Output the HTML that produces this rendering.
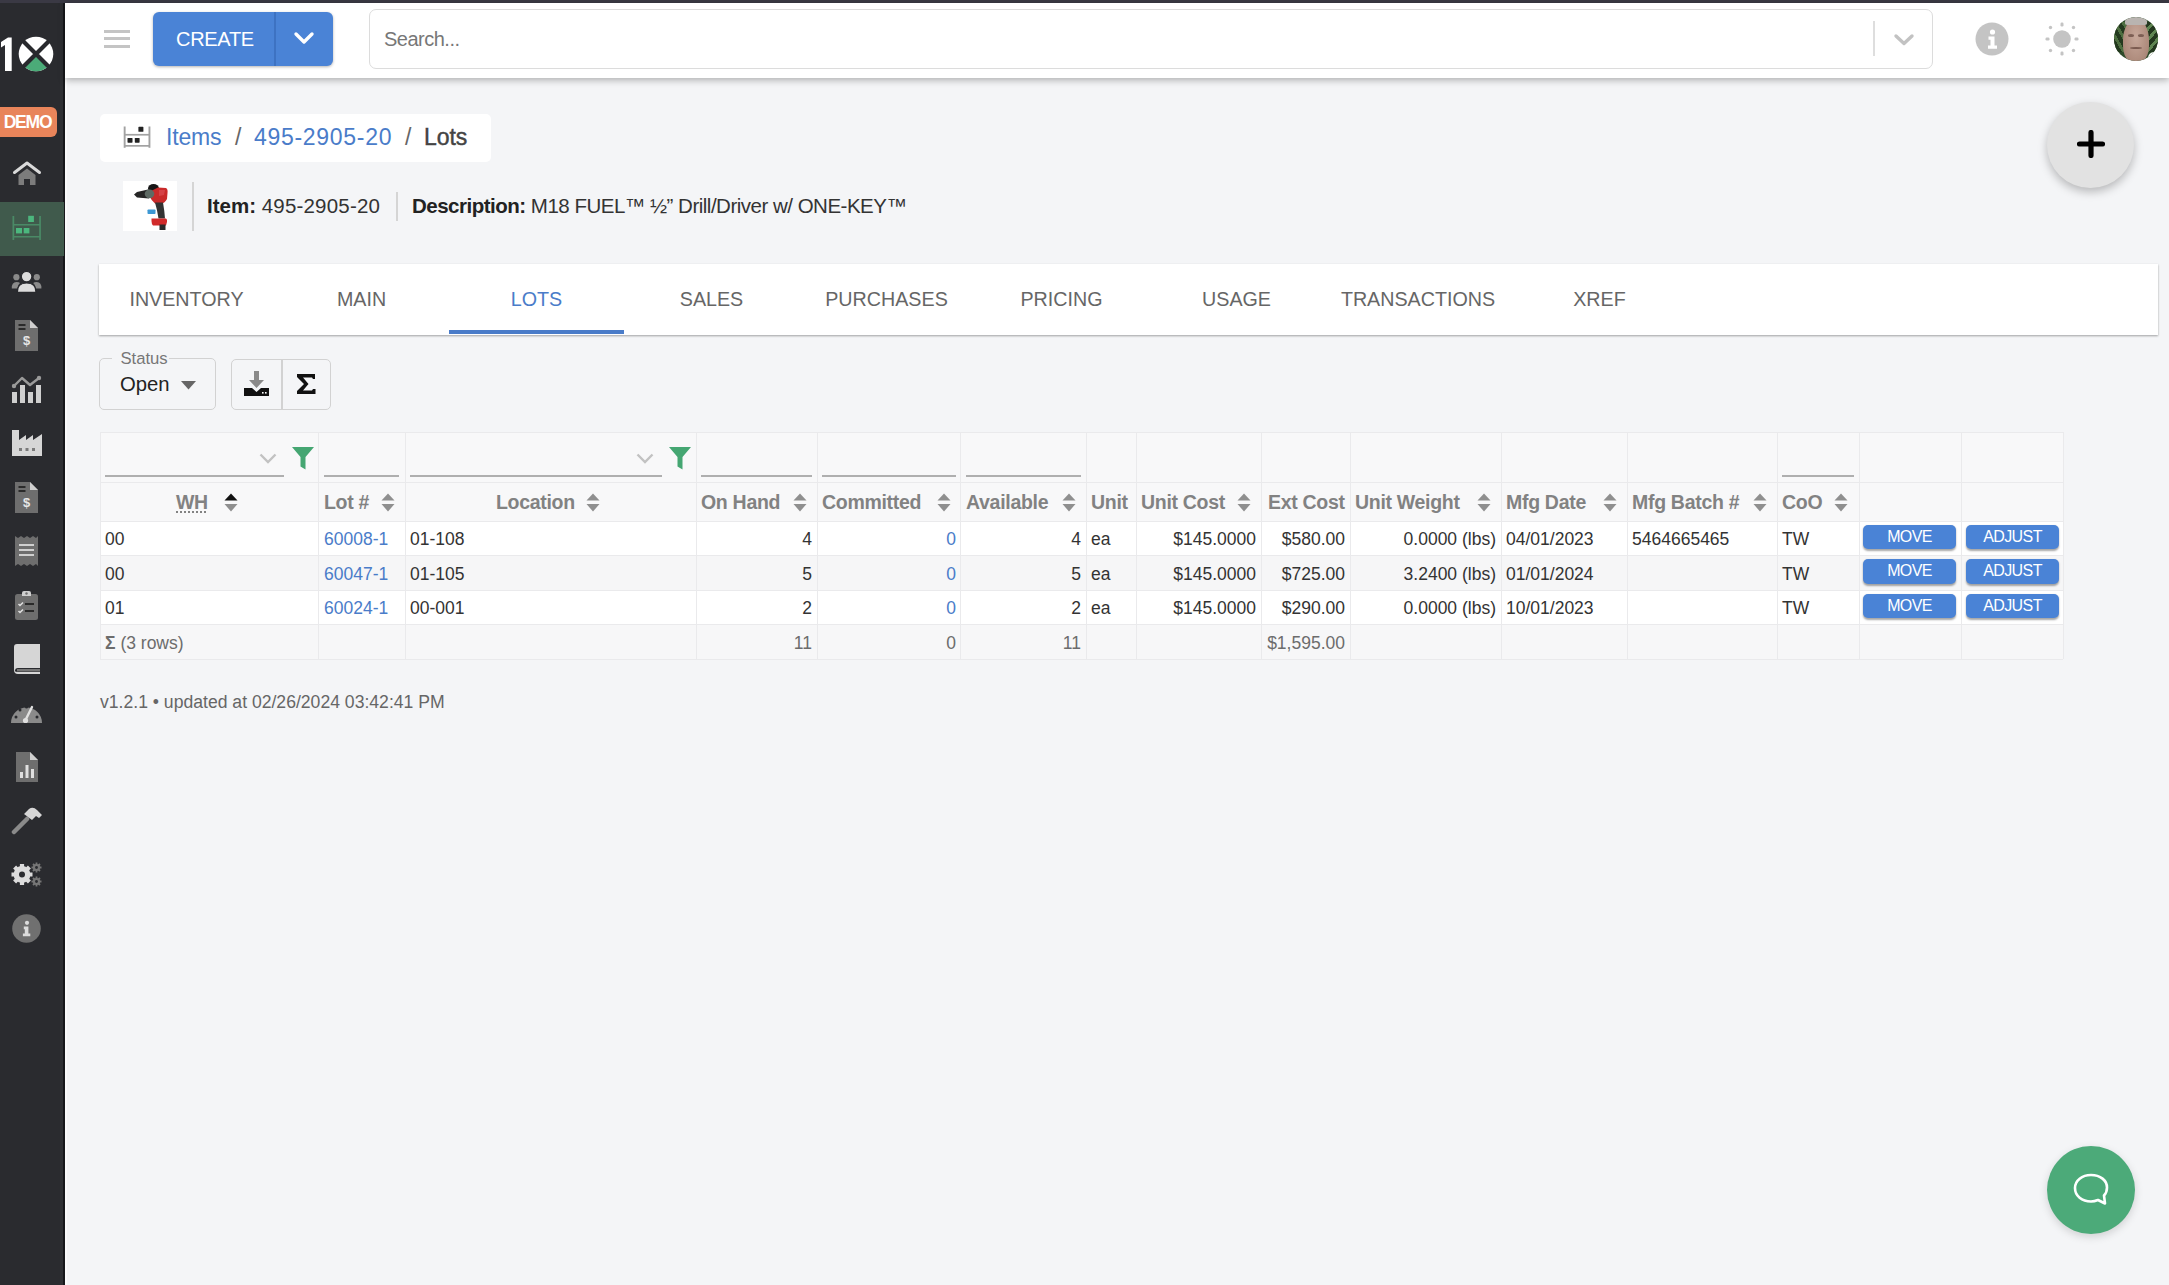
<!DOCTYPE html>
<html><head><meta charset="utf-8">
<style>
*{box-sizing:border-box;margin:0;padding:0}
html,body{width:2169px;height:1285px;overflow:hidden;background:#f4f5f7;font-family:"Liberation Sans",sans-serif;color:#333}
.abs{position:absolute}
#topbar{left:0;top:0;width:2169px;height:3px;background:#3a3944}
#side{left:0;top:3px;width:65px;height:1282px;background:#2a2b2f}
#side .edge{position:absolute;left:60.3px;top:0;width:2.4px;height:100%;background:#2f3034}
#side .line{position:absolute;left:62.8px;top:0;width:2.2px;height:100%;background:#17181b}
#hdr{left:65px;top:3px;width:2104px;height:75px;background:#fff;box-shadow:0 2px 7px rgba(0,0,0,.3)}
.ic{position:absolute}

.tab{display:flex;align-items:center;justify-content:center;height:71px;padding-top:1.5px}
.tab.act{color:#4a7cc9}

.hl{height:1px;background:#eaeaec}
.vl{width:1px;background:#eaeaec}
.th{top:488px;font-size:19.5px;line-height:28px;font-weight:700;color:#828282;white-space:nowrap;letter-spacing:-0.3px}
.td{font-size:17.5px;line-height:28px;white-space:nowrap;margin-top:1px}
.btn{margin-top:-1.7px;height:24.5px;background:#4a83d6;border-radius:5px;color:#fff;font-size:16px;letter-spacing:-0.6px;line-height:23px;text-align:center;box-shadow:0 1.5px 2px rgba(0,0,0,.35)}
</style></head><body>
<div id="topbar" class="abs"></div>
<div id="side" class="abs"><div class="edge"></div><div class="line"></div></div>

<!-- logo -->
<svg class="abs" style="left:0;top:36px" width="56" height="37" viewBox="0 0 56 37">
 <path d="M1 6 L8 1.5 H11.7 V35 H5 V9 L1 11.5 Z" fill="#fff"/>
 <circle cx="36" cy="18" r="17.3" fill="#fff"/>
 <path d="M36 18 L48.2 30.2 A17.3 17.3 0 0 1 23.8 30.2 Z" fill="#4bab78"/>
 <path d="M23 5 L49 31 M49 5 L23 31" stroke="#28292d" stroke-width="4.2"/>
</svg>
<div class="abs" style="left:0;top:107px;width:57px;height:30px;background:#e8845a;border-radius:0 6px 6px 0;color:#fff;font-weight:700;font-size:17.5px;line-height:30px;text-align:center;letter-spacing:-1.2px;text-indent:-2px">DEMO</div>
<!-- active item bg -->
<div class="abs" style="left:0;top:202px;width:64px;height:54px;background:#405a4c"></div>
<!-- home -->
<svg class="abs" style="left:12px;top:161px" width="30" height="25" viewBox="0 0 30 25">
 <path d="M6.5 14 L15 7.5 L23.5 14 V24 H18 V18 H12 V24 H6.5 Z" fill="#7c7c7c"/>
 <path d="M2.5 11.5 L15 2 L27.5 11.5" fill="none" stroke="#dadada" stroke-width="3" stroke-linecap="round" stroke-linejoin="round"/>
</svg>
<!-- items (active) -->
<svg class="abs" style="left:12px;top:215px" width="30" height="26" viewBox="0 0 30 26"><g fill="#4a8a66"><rect x="0.5" y="1" width="1.7" height="24"/><rect x="27.2" y="1" width="1.7" height="24"/><rect x="1" y="9" width="27" height="1.5"/><rect x="1" y="21" width="27" height="1.5"/></g><g fill="#4cb77e"><rect x="16.2" y="0.8" width="5.7" height="6.2"/><rect x="4" y="13" width="6" height="5.4"/><rect x="11.7" y="13" width="5.7" height="5.4"/></g></svg>
<!-- people -->
<svg class="abs" style="left:11px;top:270px" width="32" height="24" viewBox="0 0 32 24"><g fill="#8a8a8a"><circle cx="5.4" cy="7.2" r="3.1"/><circle cx="25.8" cy="7.2" r="3.1"/><path d="M0.8 18.5 Q0.5 12 5.5 12 Q8 12 9 13 Q6.5 15 6.3 18.5 Z"/><path d="M30.4 18.5 Q30.7 12 25.7 12 Q23.2 12 22.2 13 Q24.7 15 24.9 18.5 Z"/></g><g fill="#dcdcdc" stroke="#28292d" stroke-width="1.2"><circle cx="15.6" cy="6.6" r="5.3"/><path d="M6.3 22.4 Q6 13 15.6 13 Q25.2 13 25 22.4 Z"/></g></svg>
<!-- invoice -->
<svg class="abs ic" style="left:15px;top:320px" width="24" height="31" viewBox="0 0 24 31">
 <path d="M0 0 H15 L23 8 V31 H0 Z" fill="#6e6e6e"/><path d="M15 0 L23 8 H15 Z" fill="#cfcfcf"/>
 <rect x="3.5" y="4" width="7" height="2" fill="#2a2a2a"/><rect x="3.5" y="8" width="7" height="2" fill="#2a2a2a"/>
 <text x="11.5" y="25" font-family="Liberation Sans" font-size="13" font-weight="700" fill="#e6e6e6" text-anchor="middle">$</text>
</svg>
<!-- chart -->
<svg class="abs ic" style="left:11px;top:375px" width="31" height="28" viewBox="0 0 31 28">
 <g fill="#cfcfcf"><rect x="1" y="17" width="5" height="11"/><rect x="9" y="10" width="5" height="18"/><rect x="17" y="17" width="5" height="11"/><rect x="25" y="10" width="5" height="18"/></g>
 <path d="M3 11 L11 3 L19 10 L28 3" fill="none" stroke="#9a9a9a" stroke-width="2.4" stroke-linejoin="round"/>
 <circle cx="3" cy="11" r="2.2" fill="#9a9a9a"/><circle cx="28" cy="3" r="2.2" fill="#9a9a9a"/>
</svg>
<!-- factory -->
<svg class="abs ic" style="left:12px;top:430px" width="30" height="26" viewBox="0 0 30 26">
 <path d="M0 0 H7 V10 L14 5 V10 L21 5 V10 L30 4 V26 H0 Z" fill="#d6d6d6"/>
 <g fill="#7a7a7a"><rect x="7" y="18" width="3" height="3"/><rect x="13.5" y="18" width="3" height="3"/><rect x="20" y="18" width="3" height="3"/></g>
</svg>
<!-- invoice 2 -->
<svg class="abs ic" style="left:15px;top:482px" width="24" height="31" viewBox="0 0 24 31">
 <path d="M0 0 H15 L23 8 V31 H0 Z" fill="#6e6e6e"/><path d="M15 0 L23 8 H15 Z" fill="#cfcfcf"/>
 <rect x="3.5" y="4" width="7" height="2" fill="#2a2a2a"/><rect x="3.5" y="8" width="7" height="2" fill="#2a2a2a"/>
 <text x="11.5" y="25" font-family="Liberation Sans" font-size="13" font-weight="700" fill="#e6e6e6" text-anchor="middle">$</text>
</svg>
<!-- receipt -->
<svg class="abs ic" style="left:15px;top:536px" width="24" height="30" viewBox="0 0 24 30">
 <path d="M0 0 L3 2 L6 0 L9 2 L12 0 L15 2 L18 0 L21 2 L23 0 V30 L21 28 L18 30 L15 28 L12 30 L9 28 L6 30 L3 28 L0 30 Z" fill="#6e6e6e"/>
 <g fill="#cfcfcf"><rect x="4" y="8" width="15" height="2"/><rect x="4" y="13" width="15" height="2"/><rect x="4" y="18" width="15" height="2"/></g>
</svg>
<!-- clipboard -->
<svg class="abs ic" style="left:15px;top:590px" width="24" height="30" viewBox="0 0 24 30">
 <rect x="0" y="4" width="23" height="26" rx="2.5" fill="#6e6e6e"/>
 <path d="M7 6 V3 Q7 1 9 1 H14 Q16 1 16 3 V6 Z" fill="#cfcfcf"/><circle cx="11.5" cy="3.5" r="1.2" fill="#6e6e6e"/>
 <path d="M3.5 14 L5 15.5 L8 12.5" fill="none" stroke="#e0e0e0" stroke-width="1.5"/><rect x="10" y="13" width="9" height="2" fill="#2a2a2a"/>
 <path d="M3.5 21 L5 22.5 L8 19.5" fill="none" stroke="#e0e0e0" stroke-width="1.5"/><rect x="10" y="20" width="9" height="2" fill="#2a2a2a"/>
</svg>
<!-- book -->
<svg class="abs ic" style="left:14px;top:644px" width="26" height="30" viewBox="0 0 26 30">
 <path d="M3 0 H26 V24 H4 Q1 24 1 27 Q1 28 4 28 H26 V30 H4 Q0 30 0 26 V3 Q0 0 3 0 Z" fill="#d6d6d6"/>
 <rect x="3" y="25" width="23" height="2.5" fill="#777"/>
</svg>
<!-- gauge -->
<svg class="abs ic" style="left:11px;top:702px" width="31" height="22" viewBox="0 0 31 22">
 <path d="M0 21 A15.5 15.5 0 0 1 31 21 Z" fill="#8a8a8a"/>
 <g fill="#28292d"><circle cx="5" cy="15" r="1.5"/><circle cx="9" cy="8" r="1.5"/><circle cx="15.5" cy="5" r="1.5"/><circle cx="26" cy="15" r="1.5"/></g>
 <path d="M14 19 L21 5" stroke="#e0e0e0" stroke-width="2.4" stroke-linecap="round"/><circle cx="14.5" cy="18.5" r="2.6" fill="#e0e0e0"/>
</svg>
<!-- report -->
<svg class="abs ic" style="left:16px;top:752px" width="23" height="30" viewBox="0 0 23 30">
 <path d="M0 0 H14 L22 8 V30 H0 Z" fill="#6e6e6e"/><path d="M14 0 L22 8 H14 Z" fill="#cfcfcf"/>
 <g fill="#e0e0e0"><rect x="4" y="20" width="3" height="6"/><rect x="9.5" y="13" width="3" height="13"/><rect x="15" y="17" width="3" height="9"/></g>
</svg>
<!-- hammer -->
<svg class="abs ic" style="left:11px;top:806px" width="31" height="29" viewBox="0 0 31 29">
 <path d="M3 26 L16 13" stroke="#8a8a8a" stroke-width="4.5" stroke-linecap="round"/>
 <path d="M13 8 L18 3 Q22 0 26 4 L31 9 L28 12 L25 10 L21 14 Z" fill="#d6d6d6"/>
</svg>
<!-- gears -->
<svg class="abs ic" style="left:11px;top:862px" width="31" height="25" viewBox="0 0 31 25">
 <g fill="#dcdcdc"><circle cx="11" cy="12.5" r="8.4"/>
 <g stroke="#dcdcdc" stroke-width="4.2"><path d="M11 2 V23 M0.5 12.5 H21.5 M3.6 5.1 L18.4 19.9 M18.4 5.1 L3.6 19.9"/></g></g>
 <circle cx="11" cy="12.5" r="3" fill="#2a2b2f"/>
 <g fill="#767676"><circle cx="25.5" cy="5.5" r="3.6"/><circle cx="25.5" cy="19.5" r="3.6"/></g><g stroke="#767676" stroke-width="1.8"><path d="M25.5 0.5 V10.5 M20.5 5.5 H30.5 M22 2 L29 9 M29 2 L22 9"/><path d="M25.5 14.5 V24.5 M20.5 19.5 H30.5 M22 16 L29 23 M29 16 L22 23"/></g><g fill="#2a2b2f"><circle cx="25.5" cy="5.5" r="1.4"/><circle cx="25.5" cy="19.5" r="1.4"/></g>
</svg>
<!-- info -->
<svg class="abs ic" style="left:12px;top:914px" width="29" height="29" viewBox="0 0 29 29">
 <circle cx="14.5" cy="14.5" r="14.3" fill="#707070"/><circle cx="15" cy="8.8" r="2.1" fill="#dcdcdc"/>
 <path d="M11.8 12.5 h4.6 v7 h1.9 v2.8 h-7.4 v-2.8 h1.9 v-4.2 h-1 z" fill="#dcdcdc"/>
</svg>
<div class="abs" style="left:65px;top:3px;width:2px;height:1282px;background:#fbfbfc"></div>
<div id="hdr" class="abs"></div>

<!-- hamburger -->
<div class="abs" style="left:104px;top:30px;width:26px;height:3px;background:#c4c4c4"></div>
<div class="abs" style="left:104px;top:37px;width:26px;height:3px;background:#c4c4c4"></div>
<div class="abs" style="left:104px;top:45px;width:26px;height:3px;background:#c4c4c4"></div>
<!-- create button -->
<div class="abs" style="left:153px;top:12px;width:180px;height:54px;background:#4a83d6;border-radius:6px;box-shadow:0 1px 3px rgba(0,0,0,.3)"></div>
<div class="abs" style="left:274px;top:12px;width:2px;height:54px;background:#3d72c2"></div>
<div class="abs" style="left:176px;top:25px;font-size:20px;color:#fff;line-height:28px;letter-spacing:-0.3px">CREATE</div>
<svg class="abs" style="left:293px;top:31px" width="22" height="15" viewBox="0 0 22 15"><path d="M3 3 L11 11 L19 3" fill="none" stroke="#fff" stroke-width="3.4" stroke-linecap="round" stroke-linejoin="round"/></svg>
<!-- search -->
<div class="abs" style="left:369px;top:9px;width:1564px;height:60px;border:1.5px solid #dcdcdc;border-radius:7px;background:#fff"></div>
<div class="abs" style="left:384px;top:25px;font-size:20px;color:#777;line-height:28px;letter-spacing:-0.5px">Search...</div>
<div class="abs" style="left:1873px;top:21px;width:2px;height:35px;background:#dedede"></div>
<svg class="abs" style="left:1891px;top:31px" width="26" height="18" viewBox="0 0 26 18"><path d="M5 5 L13 12.5 L21 5" fill="none" stroke="#c2c2c2" stroke-width="3.4" stroke-linecap="round" stroke-linejoin="round"/></svg>
<!-- info -->
<svg class="abs" style="left:1975px;top:22px" width="34" height="34" viewBox="0 0 34 34"><circle cx="17" cy="17" r="16.5" fill="#c4c4c4"/><circle cx="17.5" cy="10" r="2.6" fill="#fff"/><path d="M13.5 14.5 h6 v9 h2.5 v3.2 h-9 v-3.2 h2.5 v-5.8 h-2 z" fill="#fff"/></svg>
<!-- sun -->
<svg class="abs" style="left:2045px;top:22px" width="34" height="34" viewBox="0 0 34 34"><circle cx="17" cy="17" r="8.8" fill="#c4c4c4"/><g fill="#c4c4c4"><rect x="15.5" y="0.5" width="3" height="4" rx="1.2"/><rect x="15.5" y="29.5" width="3" height="4" rx="1.2"/><rect x="0.5" y="15.5" width="4" height="3" rx="1.2"/><rect x="29.5" y="15.5" width="4" height="3" rx="1.2"/><circle cx="5.5" cy="5.5" r="1.7"/><circle cx="28.5" cy="5.5" r="1.7"/><circle cx="5.5" cy="28.5" r="1.7"/><circle cx="28.5" cy="28.5" r="1.7"/></g></svg>
<!-- avatar -->
<div class="abs" style="left:2114px;top:17px;width:44px;height:44px;border-radius:50%;overflow:hidden;background:#2e4a2a">
 <div style="position:absolute;left:0;top:5px;width:12px;height:30px;background:repeating-linear-gradient(60deg,#4d6e40 0 3px,#23391e 3px 7px);filter:blur(0.7px)"></div>
 <div style="position:absolute;left:32px;top:5px;width:12px;height:30px;background:repeating-linear-gradient(-50deg,#5f8552 0 3px,#24381f 3px 7px);filter:blur(0.7px)"></div>
 <div style="position:absolute;left:9px;top:2px;width:26px;height:44px;border-radius:48% 48% 40% 40%;background:radial-gradient(ellipse at 50% 40%,#c7a89a 0,#ad8a7b 70%,#8d7064 100%)"></div>
 <div style="position:absolute;left:11px;top:0px;width:22px;height:8px;border-radius:50% 50% 20% 20%;background:#b9b4b0"></div>
 <div style="position:absolute;left:14px;top:17px;width:6px;height:3px;border-radius:50%;background:#7d5f54;filter:blur(0.6px)"></div>
 <div style="position:absolute;left:24px;top:17px;width:6px;height:3px;border-radius:50%;background:#7d5f54;filter:blur(0.6px)"></div>
 <div style="position:absolute;left:16px;top:30px;width:12px;height:2px;border-radius:50%;background:#7a5a4f;filter:blur(0.5px)"></div>
 <div style="position:absolute;left:34px;top:35px;width:12px;height:12px;border-radius:50%;background:#fff"></div>
</div>
</div>


<!-- breadcrumb -->
<div class="abs" style="left:100px;top:114px;width:391px;height:48px;background:#fff;border-radius:5px"></div>
<svg class="abs" style="left:123px;top:126px" width="28" height="23" viewBox="0 0 28 23"><g fill="#a2a2a2"><rect x="0.7" y="0.5" width="1.9" height="21.3"/><rect x="25.5" y="0.5" width="1.9" height="21.3"/><rect x="1" y="7.9" width="26" height="1.7"/><rect x="1" y="19" width="26" height="1.7"/></g><g fill="#222"><rect x="15.4" y="0.8" width="5" height="5" rx="0.6"/><rect x="4.5" y="12" width="5" height="4.7" rx="0.6"/><rect x="11.8" y="12" width="4.8" height="4.7" rx="0.6"/></g></svg>
<div class="abs" style="left:166px;top:123px;font-size:23px;line-height:28px;color:#4a7cc9;letter-spacing:-0.2px">Items</div>
<div class="abs" style="left:235px;top:123px;font-size:23px;line-height:28px;color:#666">/</div>
<div class="abs" style="left:254px;top:123px;font-size:23px;line-height:28px;color:#4a7cc9;letter-spacing:0.7px">495-2905-20</div>
<div class="abs" style="left:405px;top:123px;font-size:23px;line-height:28px;color:#666">/</div>
<div class="abs" style="left:424px;top:123px;font-size:23px;line-height:28px;color:#444;font-weight:400;-webkit-text-stroke:0.45px #444;letter-spacing:-0.1px">Lots</div>
<!-- item line -->
<div class="abs" style="left:123px;top:181px;width:54px;height:50px;background:#fff"></div>
<svg class="abs" style="left:123px;top:181px;filter:blur(0.4px)" width="54" height="50" viewBox="0 0 54 50">
 <path d="M11 13.5 L14 11 L25 8.5 L26 17.5 L14 16.5 Z" fill="#262626"/>
 <ellipse cx="30.5" cy="7.5" rx="5.5" ry="4.5" fill="#151515"/>
 <path d="M27 10.5 L35 6.5 L43 7 Q45 8 44.5 12 L44 18 Q42 22 38 23 L32 22.5 Q28 19 27 16 Z" fill="#c92a2a"/>
 <path d="M36 9 L42 9 L41 14 L36 15 Z" fill="#e0545a" opacity=".6"/>
 <ellipse cx="26.5" cy="12.8" rx="4.8" ry="4.4" fill="#5e6a64"/>
 <path d="M32 21.5 L40 21.5 Q41.5 30 42 37.5 L35.5 37.5 Q34 28 32 21.5 Z" fill="#333"/>
 <rect x="24.5" y="28.5" width="8" height="4.5" rx="0.8" fill="#3d98d4"/>
 <path d="M28.5 37.5 H43 Q44.5 38 44 41 L43 44.5 H30 Q28.5 43 28.5 40 Z" fill="#d12b2b"/>
 <rect x="36.5" y="43.5" width="6" height="5.5" fill="#2a2a2a"/>
</svg>
<div class="abs" style="left:192px;top:182px;width:2px;height:49px;background:#d5d5d5"></div>
<div class="abs" style="left:207px;top:192px;font-size:20.5px;line-height:28px;color:#222"><b>Item:</b> <span style="color:#333;letter-spacing:0.2px">495-2905-20</span></div>
<div class="abs" style="left:396px;top:192px;width:2px;height:29px;background:#d5d5d5"></div>
<div class="abs" style="left:412px;top:192px;font-size:20.5px;line-height:28px;color:#222;letter-spacing:-0.5px"><b>Description:</b> <span style="color:#333">M18 FUEL™ ½” Drill/Driver w/ ONE-KEY™</span></div>
<!-- tabs -->
<div class="abs" style="left:99px;top:264px;width:2059px;height:70.5px;background:#fff;box-shadow:0 1px 2px rgba(0,0,0,.35)"></div>
<div class="abs tabs" style="left:99px;top:263px;height:71px;display:flex;font-size:19.7px;color:#666">
 <div class="tab" style="width:175px">INVENTORY</div>
 <div class="tab" style="width:175px">MAIN</div>
 <div class="tab act" style="width:175px">LOTS</div>
 <div class="tab" style="width:175px">SALES</div>
 <div class="tab" style="width:175px">PURCHASES</div>
 <div class="tab" style="width:175px">PRICING</div>
 <div class="tab" style="width:175px">USAGE</div>
 <div class="tab" style="width:188px">TRANSACTIONS</div>
 <div class="tab" style="width:175px">XREF</div>
</div>
<div class="abs" style="left:449px;top:330px;width:175px;height:4px;background:#4a7cc9"></div>
<!-- status -->
<div class="abs" style="left:99px;top:358px;width:117px;height:52px;border:1.5px solid #d2d2d2;border-radius:5px"></div>
<div class="abs" style="left:112px;top:349px;padding:0 1.5px 0 8.4px;background:#f4f5f7;font-size:16.7px;line-height:20px;color:#777">Status</div>
<div class="abs" style="left:120px;top:371px;font-size:20.3px;line-height:26px;color:#222">Open</div>
<svg class="abs" style="left:181px;top:381px" width="15" height="9" viewBox="0 0 15 9"><path d="M0 0 H15 L7.5 8.5 Z" fill="#666"/></svg>
<!-- button group -->
<div class="abs" style="left:231px;top:359px;width:100px;height:51px;border:1.5px solid #d2d2d2;border-radius:5px"></div>
<div class="abs" style="left:281px;top:359px;width:1.5px;height:51px;background:#d2d2d2"></div>
<svg class="abs" style="left:244px;top:371px" width="25" height="25" viewBox="0 0 25 25"><path d="M10 0 h5 v9 h5 l-7.5 8 l-7.5 -8 h5 z" fill="#8a8a8a"/><path d="M0 17 h8 l4.5 4 l4.5 -4 h8 v8 h-25 z" fill="#111"/><rect x="18" y="21" width="1.6" height="1.6" fill="#fff"/><rect x="21" y="21" width="1.6" height="1.6" fill="#fff"/></svg>
<svg class="abs" style="left:297px;top:374px" width="19" height="20" viewBox="0 0 19 20"><path d="M0 0 H18 V5 H16 L15 3.5 H6 L11.5 10 L6 16.5 H15 L16 15 H18.5 V20 H0 V17 L7 10 L0 3 Z" fill="#111"/></svg>
<div class="abs" style="left:100px;top:432px;width:1963px;height:89px;background:#f8f8f9"></div>
<div class="abs" style="left:100px;top:521px;width:1963px;height:34.5px;background:#ffffff"></div>
<div class="abs" style="left:100px;top:555.5px;width:1963px;height:34.5px;background:#f6f6f7"></div>
<div class="abs" style="left:100px;top:590px;width:1963px;height:34.5px;background:#ffffff"></div>
<div class="abs" style="left:100px;top:624.5px;width:1963px;height:34.5px;background:#f7f7f8"></div>
<div class="abs hl" style="left:100px;top:431.5px;width:1963px"></div>
<div class="abs hl" style="left:100px;top:481.5px;width:1963px"></div>
<div class="abs hl" style="left:100px;top:520.5px;width:1963px"></div>
<div class="abs hl" style="left:100px;top:555.0px;width:1963px"></div>
<div class="abs hl" style="left:100px;top:589.5px;width:1963px"></div>
<div class="abs hl" style="left:100px;top:624.0px;width:1963px"></div>
<div class="abs hl" style="left:100px;top:658.5px;width:1963px"></div>
<div class="abs vl" style="left:99.5px;top:432px;height:227px"></div>
<div class="abs vl" style="left:317.5px;top:432px;height:227px"></div>
<div class="abs vl" style="left:404.5px;top:432px;height:227px"></div>
<div class="abs vl" style="left:695.5px;top:432px;height:227px"></div>
<div class="abs vl" style="left:816.5px;top:432px;height:227px"></div>
<div class="abs vl" style="left:959.5px;top:432px;height:227px"></div>
<div class="abs vl" style="left:1085.5px;top:432px;height:227px"></div>
<div class="abs vl" style="left:1135.5px;top:432px;height:227px"></div>
<div class="abs vl" style="left:1260.5px;top:432px;height:227px"></div>
<div class="abs vl" style="left:1349.5px;top:432px;height:227px"></div>
<div class="abs vl" style="left:1500.5px;top:432px;height:227px"></div>
<div class="abs vl" style="left:1626.5px;top:432px;height:227px"></div>
<div class="abs vl" style="left:1776.5px;top:432px;height:227px"></div>
<div class="abs vl" style="left:1858.5px;top:432px;height:227px"></div>
<div class="abs vl" style="left:1960.5px;top:432px;height:227px"></div>
<div class="abs vl" style="left:2062.5px;top:432px;height:227px"></div>
<div class="abs" style="left:105px;top:475px;width:179px;height:2px;background:#afafaf"></div>
<svg class="abs" style="left:259px;top:453px" width="18" height="11" viewBox="0 0 18 11"><path d="M1.5 1.5 L9 9 L16.5 1.5" fill="none" stroke="#c2c2c2" stroke-width="2.4"/></svg>
<svg class="abs" style="left:292px;top:447px" width="22" height="23" viewBox="0 0 22 23"><path d="M0 0 H22 L13.5 10 V22.5 L8.5 19.5 V10 Z" fill="#45a672"/></svg>
<div class="abs" style="left:324px;top:475px;width:75px;height:2px;background:#afafaf"></div>
<div class="abs" style="left:410px;top:475px;width:252px;height:2px;background:#afafaf"></div>
<svg class="abs" style="left:636px;top:453px" width="18" height="11" viewBox="0 0 18 11"><path d="M1.5 1.5 L9 9 L16.5 1.5" fill="none" stroke="#c2c2c2" stroke-width="2.4"/></svg>
<svg class="abs" style="left:669px;top:447px" width="22" height="23" viewBox="0 0 22 23"><path d="M0 0 H22 L13.5 10 V22.5 L8.5 19.5 V10 Z" fill="#45a672"/></svg>
<div class="abs" style="left:701px;top:475px;width:111px;height:2px;background:#afafaf"></div>
<div class="abs" style="left:822px;top:475px;width:134px;height:2px;background:#afafaf"></div>
<div class="abs" style="left:966px;top:475px;width:115px;height:2px;background:#afafaf"></div>
<div class="abs" style="left:1782px;top:475px;width:72px;height:2px;background:#afafaf"></div>
<div class="abs th" style="left:176px;"><span style="text-decoration:underline dotted;text-underline-offset:3px">WH</span></div>
<svg class="abs" style="left:224px;top:493px" width="14" height="19" viewBox="0 0 14 19"><path d="M7 0.5 L13.5 7.5 H0.5 Z" fill="#111"/><path d="M7 18.5 L13.5 11 H0.5 Z" fill="#8f8f8f"/></svg>
<div class="abs th" style="left:324px;">Lot #</div>
<svg class="abs" style="left:381px;top:493px" width="14" height="19" viewBox="0 0 14 19"><path d="M7 0.5 L13.5 7.5 H0.5 Z" fill="#8f8f8f"/><path d="M7 18.5 L13.5 11 H0.5 Z" fill="#8f8f8f"/></svg>
<div class="abs th" style="left:496px;">Location</div>
<svg class="abs" style="left:586px;top:493px" width="14" height="19" viewBox="0 0 14 19"><path d="M7 0.5 L13.5 7.5 H0.5 Z" fill="#8f8f8f"/><path d="M7 18.5 L13.5 11 H0.5 Z" fill="#8f8f8f"/></svg>
<div class="abs th" style="left:701px;">On Hand</div>
<svg class="abs" style="left:793px;top:493px" width="14" height="19" viewBox="0 0 14 19"><path d="M7 0.5 L13.5 7.5 H0.5 Z" fill="#8f8f8f"/><path d="M7 18.5 L13.5 11 H0.5 Z" fill="#8f8f8f"/></svg>
<div class="abs th" style="left:822px;">Committed</div>
<svg class="abs" style="left:937px;top:493px" width="14" height="19" viewBox="0 0 14 19"><path d="M7 0.5 L13.5 7.5 H0.5 Z" fill="#8f8f8f"/><path d="M7 18.5 L13.5 11 H0.5 Z" fill="#8f8f8f"/></svg>
<div class="abs th" style="left:966px;">Available</div>
<svg class="abs" style="left:1062px;top:493px" width="14" height="19" viewBox="0 0 14 19"><path d="M7 0.5 L13.5 7.5 H0.5 Z" fill="#8f8f8f"/><path d="M7 18.5 L13.5 11 H0.5 Z" fill="#8f8f8f"/></svg>
<div class="abs th" style="left:1091px;">Unit</div>
<div class="abs th" style="left:1141px;">Unit Cost</div>
<svg class="abs" style="left:1237px;top:493px" width="14" height="19" viewBox="0 0 14 19"><path d="M7 0.5 L13.5 7.5 H0.5 Z" fill="#8f8f8f"/><path d="M7 18.5 L13.5 11 H0.5 Z" fill="#8f8f8f"/></svg>
<div class="abs th" style="left:1268px;">Ext Cost</div>
<div class="abs th" style="left:1355px;">Unit Weight</div>
<svg class="abs" style="left:1477px;top:493px" width="14" height="19" viewBox="0 0 14 19"><path d="M7 0.5 L13.5 7.5 H0.5 Z" fill="#8f8f8f"/><path d="M7 18.5 L13.5 11 H0.5 Z" fill="#8f8f8f"/></svg>
<div class="abs th" style="left:1506px;">Mfg Date</div>
<svg class="abs" style="left:1603px;top:493px" width="14" height="19" viewBox="0 0 14 19"><path d="M7 0.5 L13.5 7.5 H0.5 Z" fill="#8f8f8f"/><path d="M7 18.5 L13.5 11 H0.5 Z" fill="#8f8f8f"/></svg>
<div class="abs th" style="left:1632px;">Mfg Batch #</div>
<svg class="abs" style="left:1753px;top:493px" width="14" height="19" viewBox="0 0 14 19"><path d="M7 0.5 L13.5 7.5 H0.5 Z" fill="#8f8f8f"/><path d="M7 18.5 L13.5 11 H0.5 Z" fill="#8f8f8f"/></svg>
<div class="abs th" style="left:1782px;">CoO</div>
<svg class="abs" style="left:1834px;top:493px" width="14" height="19" viewBox="0 0 14 19"><path d="M7 0.5 L13.5 7.5 H0.5 Z" fill="#8f8f8f"/><path d="M7 18.5 L13.5 11 H0.5 Z" fill="#8f8f8f"/></svg>
<div class="abs td" style="left:105px;top:524.25px;color:#333">00</div>
<div class="abs td" style="left:324px;top:524.25px;color:#4a7cc9">60008-1</div>
<div class="abs td" style="left:410px;top:524.25px;color:#333">01-108</div>
<div class="abs td" style="left:512px;width:300px;text-align:right;top:524.25px;color:#333">4</div>
<div class="abs td" style="left:656px;width:300px;text-align:right;top:524.25px;color:#4a7cc9">0</div>
<div class="abs td" style="left:781px;width:300px;text-align:right;top:524.25px;color:#333">4</div>
<div class="abs td" style="left:1091px;top:524.25px;color:#333">ea</div>
<div class="abs td" style="left:956px;width:300px;text-align:right;top:524.25px;color:#333">$145.0000</div>
<div class="abs td" style="left:1045px;width:300px;text-align:right;top:524.25px;color:#333">$580.00</div>
<div class="abs td" style="left:1196px;width:300px;text-align:right;top:524.25px;color:#333">0.0000 (lbs)</div>
<div class="abs td" style="left:1506px;top:524.25px;color:#333">04/01/2023</div>
<div class="abs td" style="left:1632px;top:524.25px;color:#333">5464665465</div>
<div class="abs td" style="left:1782px;top:524.25px;color:#333">TW</div>
<div class="abs btn" style="left:1863px;top:526.25px;width:93px">MOVE</div>
<div class="abs btn" style="left:1966px;top:526.25px;width:93px">ADJUST</div>
<div class="abs td" style="left:105px;top:558.75px;color:#333">00</div>
<div class="abs td" style="left:324px;top:558.75px;color:#4a7cc9">60047-1</div>
<div class="abs td" style="left:410px;top:558.75px;color:#333">01-105</div>
<div class="abs td" style="left:512px;width:300px;text-align:right;top:558.75px;color:#333">5</div>
<div class="abs td" style="left:656px;width:300px;text-align:right;top:558.75px;color:#4a7cc9">0</div>
<div class="abs td" style="left:781px;width:300px;text-align:right;top:558.75px;color:#333">5</div>
<div class="abs td" style="left:1091px;top:558.75px;color:#333">ea</div>
<div class="abs td" style="left:956px;width:300px;text-align:right;top:558.75px;color:#333">$145.0000</div>
<div class="abs td" style="left:1045px;width:300px;text-align:right;top:558.75px;color:#333">$725.00</div>
<div class="abs td" style="left:1196px;width:300px;text-align:right;top:558.75px;color:#333">3.2400 (lbs)</div>
<div class="abs td" style="left:1506px;top:558.75px;color:#333">01/01/2024</div>
<div class="abs td" style="left:1632px;top:558.75px;color:#333"></div>
<div class="abs td" style="left:1782px;top:558.75px;color:#333">TW</div>
<div class="abs btn" style="left:1863px;top:560.75px;width:93px">MOVE</div>
<div class="abs btn" style="left:1966px;top:560.75px;width:93px">ADJUST</div>
<div class="abs td" style="left:105px;top:593.25px;color:#333">01</div>
<div class="abs td" style="left:324px;top:593.25px;color:#4a7cc9">60024-1</div>
<div class="abs td" style="left:410px;top:593.25px;color:#333">00-001</div>
<div class="abs td" style="left:512px;width:300px;text-align:right;top:593.25px;color:#333">2</div>
<div class="abs td" style="left:656px;width:300px;text-align:right;top:593.25px;color:#4a7cc9">0</div>
<div class="abs td" style="left:781px;width:300px;text-align:right;top:593.25px;color:#333">2</div>
<div class="abs td" style="left:1091px;top:593.25px;color:#333">ea</div>
<div class="abs td" style="left:956px;width:300px;text-align:right;top:593.25px;color:#333">$145.0000</div>
<div class="abs td" style="left:1045px;width:300px;text-align:right;top:593.25px;color:#333">$290.00</div>
<div class="abs td" style="left:1196px;width:300px;text-align:right;top:593.25px;color:#333">0.0000 (lbs)</div>
<div class="abs td" style="left:1506px;top:593.25px;color:#333">10/01/2023</div>
<div class="abs td" style="left:1632px;top:593.25px;color:#333"></div>
<div class="abs td" style="left:1782px;top:593.25px;color:#333">TW</div>
<div class="abs btn" style="left:1863px;top:595.25px;width:93px">MOVE</div>
<div class="abs btn" style="left:1966px;top:595.25px;width:93px">ADJUST</div>
<div class="abs td" style="left:105px;top:627.75px;color:#6c6c6c"><b>Σ</b> (3 rows)</div>
<div class="abs td" style="left:512px;width:300px;text-align:right;top:627.75px;color:#6c6c6c">11</div>
<div class="abs td" style="left:656px;width:300px;text-align:right;top:627.75px;color:#6c6c6c">0</div>
<div class="abs td" style="left:781px;width:300px;text-align:right;top:627.75px;color:#6c6c6c">11</div>
<div class="abs td" style="left:1045px;width:300px;text-align:right;top:627.75px;color:#6c6c6c">$1,595.00</div>
<div class="abs" style="left:100px;top:690px;font-size:17.6px;line-height:24px;color:#666">v1.2.1 • updated at 02/26/2024 03:42:41 PM</div>
<div class="abs" style="left:2047px;top:102px;width:87px;height:86px;border-radius:50%;background:#e2e2e2;box-shadow:0 4px 10px rgba(0,0,0,.25)"></div>
<svg class="abs" style="left:2077px;top:130px" width="28" height="28" viewBox="0 0 28 28"><path d="M14 2.5 V25.5 M2.5 14 H25.5" stroke="#000" stroke-width="5.2" stroke-linecap="round"/></svg>
<div class="abs" style="left:2047px;top:1146px;width:88px;height:88px;border-radius:50%;background:#4caa79;box-shadow:0 3px 8px rgba(0,0,0,.15)"></div>
<svg class="abs" style="left:2072px;top:1172px" width="38" height="36" viewBox="0 0 38 36"><path d="M19 3 C28.5 3 35 8.5 35 15.5 C35 19.5 33.5 22 32 23.5 L33 31.5 L26 28 C24 28.8 21.5 29.5 19 29.5 C10 29.5 3 24 3 16 C3 8.5 10 3 19 3 Z" fill="none" stroke="#fff" stroke-width="2.6" stroke-linejoin="round"/></svg>
</body></html>
